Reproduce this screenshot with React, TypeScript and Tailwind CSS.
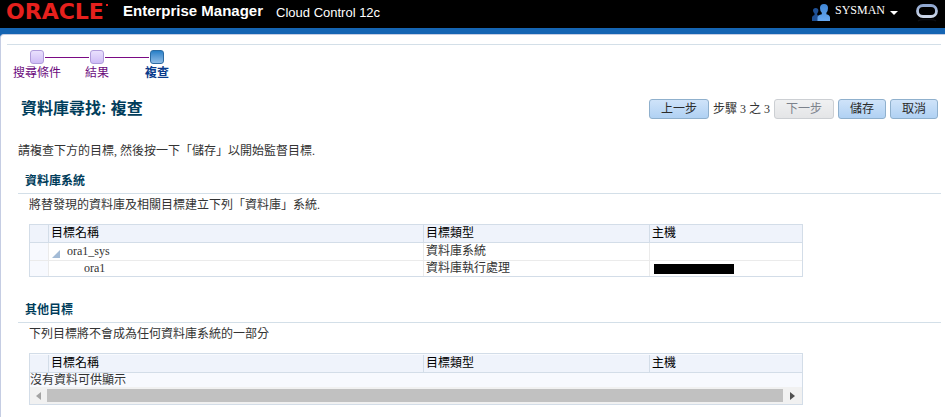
import type { ReactNode } from "react";

const serif =
  "font-['Liberation_Serif','Noto_Sans_CJK_TC',serif]";
const sans =
  "font-['Liberation_Sans','Noto_Sans_CJK_TC',sans-serif]";

function UsersIcon() {
  return (
    <svg width="18" height="17" viewBox="0 0 18 17" aria-hidden="true">
      <defs>
        <linearGradient id="front" x1="0" y1="0" x2="0" y2="1">
          <stop offset="0" stopColor="#3f86d6" />
          <stop offset="1" stopColor="#69a9f0" />
        </linearGradient>
      </defs>
      <path
        d="M0 17v-3.500q0-2 2.500-2.500v-1.500Q1 8 1 6.500 1 4 3.700 4t2.700 2.500q0 1.500-1.200 3V11q2.800.5 2.800 2.500V17z"
        fill="#1f4f93"
      />
      <path
        d="M5.500 17v-3.500q0-2.300 4.300-3.200V8.800Q8 7 8 3.900 8 0 12 0t4 3.900q0 3.100-1.600 4.900v1.500q3.600.9 3.600 3.200V17z"
        fill="url(#front)"
      />
    </svg>
  );
}

function RingIcon() {
  return (
    <svg width="22" height="18" viewBox="0 0 22 18" aria-hidden="true">
      <defs>
        <linearGradient id="ring" x1="0" y1="0" x2="0" y2="1">
          <stop offset="0" stopColor="#8fa6cf" />
          <stop offset="1" stopColor="#cdd7e8" />
        </linearGradient>
      </defs>
      <rect x="1.500" y="1.500" width="19" height="11" rx="5.500" fill="none" stroke="url(#ring)" strokeWidth="2.800" />
      <path d="M2 17q2-1.500 5-1.500h8q3 0 5 1.500" fill="none" stroke="#0e1014" strokeWidth="1.500" />
    </svg>
  );
}

function Header() {
  return (
    <header className="flex h-7 items-start justify-between bg-black pl-[6px] pr-[7px] text-white">
      <div className={`flex ${sans}`}>
        <div className="flex w-[117px] items-start font-['DejaVu_Sans',sans-serif] text-[22px] font-bold leading-6 text-[#e5201d]">
          ORACLE
          <span className="ml-[2px] mt-1 size-[2px] bg-[#e5201d]" />
        </div>
        <h1 className="text-[15px] font-bold leading-[22px]">Enterprise Manager</h1>
        <span className="ml-[13px] text-[13px] leading-[25px]">Cloud Control 12c</span>
      </div>
      <div className="flex items-start">
        <span className="pt-1">
          <UsersIcon />
        </span>
        <button type="button" className={`ml-[5px] flex items-center gap-[5px] text-[12px] leading-5 ${serif}`}>
          SYSMAN
          <svg width="8" height="4" viewBox="0 0 8 4" className="mt-[6px]" aria-hidden="true">
            <path d="M0 0h8L4 4z" fill="#fff" />
          </svg>
        </button>
        <span className="ml-[18px] pt-1">
          <RingIcon />
        </span>
      </div>
    </header>
  );
}

const steps = ["搜尋條件", "結果", "複查"];

function Train() {
  return (
    <nav aria-label="步驟">
      <ol className="flex">
        {steps.map((label, i) => {
          const current = i === steps.length - 1;
          return (
            <li key={label} className="w-[60px] text-center">
              <a
                href="#"
                aria-current={current ? "step" : undefined}
                className={`block text-[12px] leading-4 ${current ? "font-bold text-[#0a3b8c]" : "text-[#6b0a7c]"}`}
              >
                <span className="mb-[1px] flex items-center">
                  <span className={`h-px flex-1 ${i > 0 ? "bg-[#7a0a84]" : ""}`} />
                  <span
                    className={`mx-[1px] size-[14px] rounded-[3px] border bg-linear-to-b ${
                      current
                        ? "border-[#2c6ba3] from-[#2580c8] to-[#8fbde6]"
                        : "border-[#b09ddb] from-[#e9e0fd] to-[#cfbdf6]"
                    }`}
                  />
                  <span className={`h-px flex-1 ${current ? "" : "bg-[#7a0a84]"}`} />
                </span>
                {label}
              </a>
            </li>
          );
        })}
      </ol>
    </nav>
  );
}

function Button({ children, disabled }: { children: ReactNode; disabled?: boolean }) {
  return (
    <button
      type="button"
      disabled={disabled}
      className="h-5 rounded-[3px] border border-[#8fb0cd] bg-linear-to-b from-[#cfe3f9] to-[#b0d1f3] px-[11px] text-[12px] leading-4 text-[#2b2b2b] disabled:border-[#cccfd3] disabled:from-[#f0f1f2] disabled:to-[#e4e5e7] disabled:text-[#7c828c]"
    >
      {children}
    </button>
  );
}

function Section({ title, note, children }: { title: string; note: string; children: ReactNode }) {
  return (
    <section className="ml-[11px]">
      <h3 className="border-b border-[#d3dfe8] pb-1 pl-[7px] text-[12px] font-bold leading-4 text-[#003d5b]">
        {title}
      </h3>
      <div className="pl-[11px] pt-[3px]">
        <p className="mb-[11px]">{note}</p>
        {children}
      </div>
    </section>
  );
}

function Columns() {
  return (
    <colgroup>
      <col className="w-[19px]" />
      <col className="w-[375px]" />
      <col className="w-[226px]" />
      <col />
    </colgroup>
  );
}

function HeadRow() {
  const cell = "border-b border-[#d3dde8] p-0 text-left align-top font-normal";
  return (
    <thead>
      <tr className="h-[18px] bg-[#eff3fb] leading-[17px] text-black">
        <th className={`border-r ${cell}`} />
        <th className={`border-r ${cell} pl-[2px]`}>目標名稱</th>
        <th className={`border-r ${cell} pl-[2px]`}>目標類型</th>
        <th className={`${cell} pl-[2px]`}>主機</th>
      </tr>
    </thead>
  );
}

const frame = "w-full max-w-[774px] border border-[#d3dde8]";
const grid = "w-full table-fixed border-separate border-spacing-0";

function SystemTable() {
  const line = "border-b border-[#ebebeb] p-0 align-top";
  return (
    <div className={frame}>
      <table className={grid}>
        <Columns />
        <HeadRow />
        <tbody className="leading-[15px]">
          <tr className="h-[18px] leading-[17px]">
            <td className={`border-r ${line} bg-[#f7f9fe]`} />
            <td className={`border-r ${line} pl-[3px]`}>
              <span className="flex items-center">
                <button type="button" aria-label="收合" className="mr-[7px] pt-[5px]">
                  <svg width="8" height="8" viewBox="0 0 8 8" className="block" aria-hidden="true">
                    <path d="M8 0v8H0z" fill="#a3bbd6" />
                  </svg>
                </button>
                <a href="#">ora1_sys</a>
              </span>
            </td>
            <td className={`border-r ${line} pl-[2px]`}>資料庫系統</td>
            <td className={line} />
          </tr>
          <tr>
            <td className="border-r border-[#ebebeb] bg-[#f7f9fe] p-0" />
            <td className="border-r border-[#ebebeb] p-0 pl-[35px]">
              <a href="#" className="block">ora1</a>
            </td>
            <td className="border-r border-[#ebebeb] p-0 pl-[2px]">資料庫執行處理</td>
            <td className="p-0 pl-1">
              <span className="block h-[10px] w-20 bg-black" />
            </td>
          </tr>
        </tbody>
      </table>
    </div>
  );
}

function OtherTable() {
  return (
    <div className={frame}>
      <table className={`${grid} border-t border-[#f8fafe]`}>
        <Columns />
        <HeadRow />
        <tbody>
          <tr className="bg-[#f7f9fe] leading-[14px]">
            <td colSpan={4} className="p-0">
              沒有資料可供顯示
            </td>
          </tr>
        </tbody>
      </table>
      <div className="flex h-[17px] items-center bg-[#f1f1f1]">
        <button type="button" aria-label="向左捲動" className="flex w-[17px] justify-center">
          <svg width="5" height="8" viewBox="0 0 5 8" aria-hidden="true">
            <path d="M5 0v8L0 4z" fill="#a3a3a3" />
          </svg>
        </button>
        <span className="h-[13px] flex-1 bg-[#c1c1c1]" />
        <button type="button" aria-label="向右捲動" className="flex w-[19px] justify-center">
          <svg width="5" height="8" viewBox="0 0 5 8" aria-hidden="true">
            <path d="M0 0v8l5-4z" fill="#505050" />
          </svg>
        </button>
      </div>
    </div>
  );
}

export default function App() {
  return (
    <div className={`bg-[#1565b3] text-[12px] leading-4 text-[#333] ${serif}`}>
      <Header />
      <main className="mt-[6px] min-h-[calc(100vh-34px)] rounded-tl-[4px] border-l border-t border-[#c5cde3] bg-white pb-3 pl-[6px] pr-1 pt-[9px]">
        <div className="border-t border-[#d3dfe8] pt-[5px]">
          <Train />
        </div>
        <div className="mt-[18px] flex items-center justify-between pl-[14px] pr-[3px]">
          <h2 className={`text-[16px] font-bold leading-5 text-[#003d5b] ${sans}`}>資料庫尋找: 複查</h2>
          <div className="flex items-center gap-1">
            <Button>上一步</Button>
            <span>步驟 3 之 3</span>
            <Button disabled>下一步</Button>
            <Button>儲存</Button>
            <Button>取消</Button>
          </div>
        </div>
        <p className="ml-[11px] mt-6">請複查下方的目標, 然後按一下「儲存」以開始監督目標.</p>
        <div className="mt-[14px] flex flex-col gap-[25px]">
          <Section title="資料庫系統" note="將替發現的資料庫及相關目標建立下列「資料庫」系統.">
            <SystemTable />
          </Section>
          <Section title="其他目標" note="下列目標將不會成為任何資料庫系統的一部分">
            <OtherTable />
          </Section>
        </div>
      </main>
    </div>
  );
}
